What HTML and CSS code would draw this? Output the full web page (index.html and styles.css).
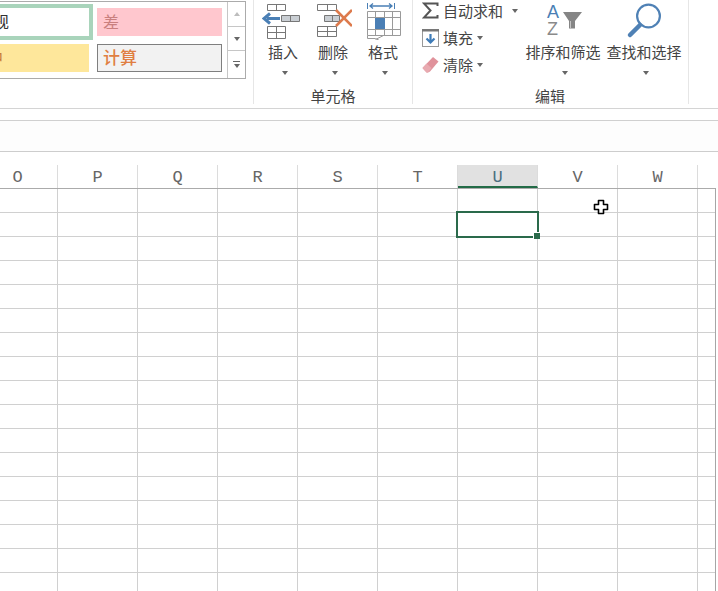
FILE: index.html
```html
<!DOCTYPE html>
<html lang="zh-CN">
<head>
<meta charset="utf-8">
<title>工作表</title>
<link rel="stylesheet" href="styles.css">
</head>
<body>
<div class="app">
  <div class="ribbon">
    <section class="group group-styles">
      <div class="gallery">
        <div class="styles">
          <div class="style style-normal"><span>常规</span></div>
          <div class="style style-bad"><span>差</span></div>
          <div class="style style-neutral"><span>适中</span></div>
          <div class="style style-calc"><span>计算</span></div>
        </div>
        <div class="gallery-scroll">
          <div class="scroll-btn"><i class="caret-up"></i></div>
          <div class="scroll-btn"><i class="caret"></i></div>
          <div class="scroll-btn scroll-more"><b></b><i class="caret"></i></div>
        </div>
      </div>
    </section>

    <section class="group group-cells">
      <div class="group-body">
        <div class="big-btn">
          <svg class="icon" width="40" height="40" viewBox="0 0 40 40">
            <g fill="#fff" stroke="#777" stroke-width="1">
              <path d="M5.500 4.500h18v6h-18zM14.500 4.500v6"/>
              <path d="M5.500 26.500h18v12h-18zM14.500 26.500v12M5.500 32.500h18"/>
              <path d="M19.500 15.500h18v6h-18zM28.500 15.500v6" fill="#c9ced3"/>
            </g>
            <path d="M18 18.500H5M8 13.500l-6 5 6 5" fill="none" stroke="#4a7fb5" stroke-width="3"/>
          </svg>
          <span>插入</span><i class="caret"></i>
        </div>
        <div class="big-btn">
          <svg class="icon" width="40" height="40" viewBox="0 0 40 40">
            <g fill="#fff" stroke="#777" stroke-width="1">
              <path d="M5.500 4.500h19v6h-19zM15.500 4.500v6"/>
              <path d="M5.500 26.500h19v10h-19zM15.500 26.500v10M5.500 31.500h19"/>
              <path d="M12.500 15.500h15v6h-15zM20.500 15.500v6" fill="#c9ced3"/>
            </g>
            <path d="M24 10l16 16M40 10L24 26" fill="none" stroke="#dd7a4c" stroke-width="2.600"/>
          </svg>
          <span>删除</span><i class="caret"></i>
        </div>
        <div class="big-btn">
          <svg class="icon" width="40" height="40" viewBox="0 0 40 40">
            <path d="M5.500 3v6M32.500 3v6" stroke="#4a7fb5" fill="none"/>
            <path d="M8 6h22M11 3.500L8 6l3 2.500M27 3.500L30 6l-3 2.500" stroke="#4a7fb5" stroke-width="1.300" fill="none"/>
            <g fill="none" stroke="#9a9a9a">
              <path d="M5.500 11.500h33v24h-33zM13.500 11.500v24M22.500 11.500v24M30.500 11.500v24M5.500 17.500h33M5.500 29.500h33"/>
              <path d="M5.500 35.500v3h8l4 2M13.500 39.500l8-4"/>
            </g>
            <rect x="13" y="18" width="10" height="11" fill="#4a7fb5"/>
          </svg>
          <span>格式</span><i class="caret"></i>
        </div>
      </div>
      <div class="group-label">单元格</div>
    </section>

    <section class="group group-edit">
      <div class="group-body">
        <div class="edit-list">
          <div class="edit-item">
            <svg class="mini" width="17" height="17" viewBox="0 0 17 17"><path d="M15.500 4V1.500H2L8.500 8.500 2 15.500h13.500V13" fill="none" stroke="#555" stroke-width="2"/></svg>
            <span>自动求和</span><i class="caret caret-far"></i>
          </div>
          <div class="edit-item">
            <svg class="mini" width="17" height="18" viewBox="0 0 17 18"><rect x=".5" y="1.500" width="16" height="16" fill="#fff" stroke="#999"/><rect x="0" y="0" width="17" height="2.500" fill="#777"/><path d="M8.500 5v8M4.500 9.500l4 4 4-4" fill="none" stroke="#3f7cb8" stroke-width="2.200"/></svg>
            <span>填充</span><i class="caret"></i>
          </div>
          <div class="edit-item">
            <svg class="mini" width="17" height="17" viewBox="0 0 17 17"><path d="M11 1l5.500 4.500-8.500 10-2 1H4.500L.5 12z" fill="#e0929b"/><path d="M.5 12l4-4.500 5 4.500L6 16.500H4.500z" fill="#e8aab0"/></svg>
            <span>清除</span><i class="caret"></i>
          </div>
        </div>
        <div class="big-btn btn-sort">
          <svg class="icon" width="40" height="40" viewBox="0 0 40 40">
            <text class="az az-a" x="4" y="18">A</text>
            <text class="az az-z" x="4" y="35">Z</text>
            <path d="M20 12h19l-7 9v7.500h-6V21z" fill="#858585"/>
            <path d="M27.500 21v7" stroke="#c4c4c4"/>
          </svg>
          <span>排序和筛选</span><i class="caret"></i>
        </div>
        <div class="big-btn btn-find">
          <svg class="icon" width="40" height="40" viewBox="0 0 40 40">
            <circle cx="24.500" cy="16" r="11.400" fill="#fff" stroke="#4f81b5" stroke-width="2.200"/>
            <path d="M16 25L6 35" stroke="#4f81b5" stroke-width="4.500" stroke-linecap="round"/>
          </svg>
          <span>查找和选择</span><i class="caret"></i>
        </div>
      </div>
      <div class="group-label label-edit">编辑</div>
    </section>
  </div>

  <div class="gap-bar"></div>
  <div class="formula-bar"></div>
  <div class="gap-bar gap-bar-low"></div>

  <div class="col-headers">
    <div class="col col-first">O</div>
    <div class="col">P</div>
    <div class="col">Q</div>
    <div class="col">R</div>
    <div class="col">S</div>
    <div class="col">T</div>
    <div class="col col-active">U</div>
    <div class="col">V</div>
    <div class="col">W</div>
  </div>

  <div class="sheet">
    <div class="selection"></div>
    <svg class="pointer" width="16" height="16" viewBox="0 0 16 16"><path d="M5.500 1.500h5v4h4v5h-4v4h-5v-4h-4v-5h4z" fill="#fff" stroke="#000" stroke-width="1.600" stroke-linejoin="round"/></svg>
  </div>
</div>
</body>
</html>
```
FILE: styles.css
```css
* { box-sizing: border-box; }
html, body { margin: 0; padding: 0; background: #fff; }
body { font-family: "Noto Sans CJK SC", "Liberation Sans", sans-serif; color: #444; }
.app { width: 718px; height: 591px; overflow: hidden; display: flex; flex-direction: column; }

.ribbon { height: 109px; flex: none; display: flex; border-bottom: 1px solid #d4d4d4; background: #fff; }
.group { height: 104px; border-right: 1px solid #e6e6e6; display: flex; flex-direction: column; }
.group-styles { width: 254px; padding-top: 1px; }
.group-cells { width: 159px; }
.group-edit { width: 276px; }
.group-body { height: 86px; flex: none; display: flex; }
.group-label { font-size: 15px; line-height: 20px; text-align: center; color: #444; }
.label-edit { width: 274px; }

.gallery { width: 246px; height: 78px; display: flex; border: 1px solid #ababab; border-left: 0; }
.styles { width: 227px; padding-top: 6px; display: grid; grid-template-columns: 89px 125px; grid-template-rows: 28px 28px; gap: 8px; }
.style { display: flex; align-items: center; white-space: nowrap; font-size: 16px; }
.style span { display: block; flex: none; padding-left: 6px; padding-bottom: 3px; }
.style-normal { background: #fff; outline: 4px solid #a9d4bb; color: #333; overflow: hidden; }
.style-normal span { margin-left: -29px; }
.style-bad { background: #ffc7ce; color: #c9807f; }
.style-neutral { background: #fee79b; color: #c77a3a; overflow: hidden; }
.style-neutral span { margin-left: -35px; }
.style-calc { background: #f2f2f2; border: 1px solid #7f7f7f; color: #e07f42; font-size: 17px; font-weight: 500; }
.style-calc span { padding-left: 5px; }

.gallery-scroll { width: 18px; border-left: 1px solid #c6c6c6; display: flex; flex-direction: column; }
.scroll-btn { height: 24px; border-bottom: 1px solid #c6c6c6; display: flex; flex-direction: column; align-items: center; justify-content: center; }
.scroll-btn:first-child { height: 25px; }
.scroll-more { flex: 1; height: auto; border-bottom: 0; gap: 2px; }
.scroll-more b { width: 7px; height: 1px; background: #666; }

.caret { display: block; width: 0; height: 0; border-left: 3.500px solid transparent; border-right: 3.500px solid transparent; border-top: 4px solid #666; }
.caret-up { display: block; width: 0; height: 0; border-left: 3.500px solid transparent; border-right: 3.500px solid transparent; border-bottom: 4px solid #bdbdbd; }

.group-cells .group-body { padding-left: 4px; }
.big-btn { width: 50px; display: flex; flex-direction: column; align-items: center; font-size: 15px; line-height: 20px; white-space: nowrap; }
.big-btn .icon { display: block; flex: none; margin-left: -2px; }
.big-btn span { margin-top: 2px; display: block; }
.big-btn .caret { margin-top: 9px; margin-left: 4px; }

.edit-list { width: 111px; padding-left: 9px; }
.edit-item { height: 27px; display: flex; align-items: center; font-size: 15px; white-space: nowrap; }
.edit-item:first-child { height: 21px; margin-bottom: 3px; }
.edit-item .mini { flex: none; margin-right: 4px; }
.edit-item .caret { margin-left: 4px; }
.edit-item .caret-far { margin-left: 9px; }

.btn-sort { width: 78px; }
.btn-find { width: 82px; margin-left: 1px; }
.btn-sort .icon, .btn-find .icon { margin-left: 0; }
.az { font-family: "Liberation Sans", sans-serif; font-size: 18px; }
.az-a { fill: #4a7fb5; }
.az-z { fill: #8a8a8a; }

.gap-bar { height: 12px; flex: none; border-bottom: 1px solid #d0d0d0; background: #fff; }
.formula-bar { height: 31px; flex: none; border-bottom: 1px solid #cdcdcd; background: #fdfdfd; }
.gap-bar-low { height: 13px; border-bottom: 0; }

.col-headers { height: 23px; flex: none; display: flex; background: #fff; }
.col { width: 80px; flex: none; border-right: 1px solid #dcdcdc; text-align: center; font-family: "Liberation Mono", monospace; font-size: 17px; line-height: 26px; color: #666; }
.col-first { width: 58px; padding-right: 22px; }
.col-active { background: #e1e1e1; color: #4a6f80; border-bottom: 2px solid #236b47; }

.sheet {
  position: relative;
  flex: 1;
  width: 716px;
  border-top: 1px solid #ababab;
  border-right: 1px solid #a6a6a6;
  background-image:
    linear-gradient(to bottom, transparent 23px, #d0d0d0 23px),
    linear-gradient(to right, transparent 79px, #d0d0d0 79px);
  background-size: 100% 24px, 80px 100%;
  background-position: 0 0, -22px 0;
}
.selection { position: absolute; left: 456px; top: 22px; width: 83px; height: 27px; border: 2px solid #2a6a4b; }
.selection::after { content: ""; position: absolute; right: -3px; bottom: -3px; width: 6px; height: 6px; background: #2a6a4b; border-left: 1px solid #fff; border-top: 1px solid #fff; }
.pointer { position: absolute; left: 593px; top: 10px; }
```
